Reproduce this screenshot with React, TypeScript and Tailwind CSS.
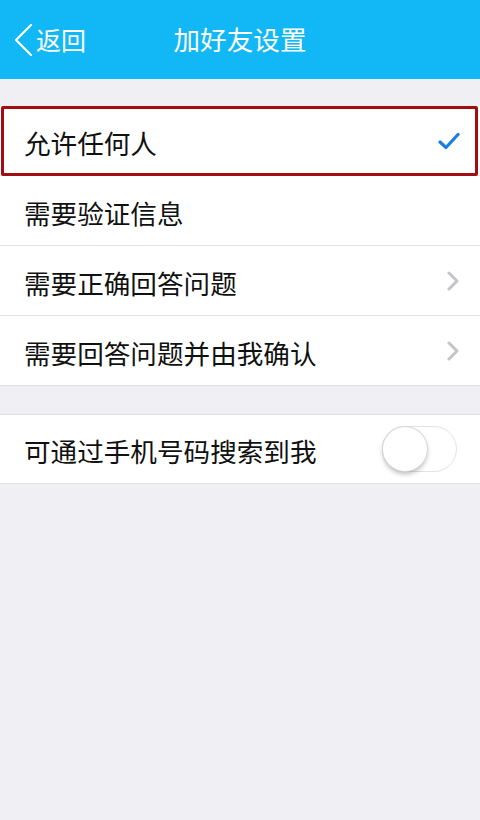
import React from "react";

const font = { fontFamily: '"Noto Sans CJK SC", "Noto Sans", sans-serif' };

function Chevron() {
  return (
    <svg width="14" height="20" viewBox="0 0 14 20" className="shrink-0">
      <polyline points="3,2 11,10 3,18" fill="none" stroke="#c4c4c9" strokeWidth="3" strokeLinecap="round" strokeLinejoin="round" />
    </svg>
  );
}

function Check() {
  return (
    <svg width="22" height="18" viewBox="0 0 22 18" className="shrink-0">
      <polyline points="2,10 8,15.5 20,2.5" fill="none" stroke="#1a7fe3" strokeWidth="3.2" strokeLinecap="round" strokeLinejoin="round" />
    </svg>
  );
}

function Row({ label, right, h = "h-[70px]", border = true, children }: { label: string; right?: React.ReactNode; h?: string; border?: boolean; children?: React.ReactNode }) {
  return (
    <div className={`relative flex ${h} items-center justify-between bg-white pl-[24px] pr-[20px] ${border ? "border-b border-[#e3e3e6]" : ""}`}>
      <span className="pt-[5px] text-[26.6px] leading-none text-[#111]">{label}</span>
      {right}
      {children}
    </div>
  );
}

export default function App() {
  return (
    <div className="min-h-[820px] w-[480px] bg-[#efeff4]" style={font}>
      <div className="relative flex h-[79px] items-center justify-center bg-[#12b7f5]">
        <div className="absolute left-[12px] top-0 flex h-[79px] items-center gap-[2px]">
          <svg width="22" height="34" viewBox="0 0 22 34">
            <polyline points="19,2 4,17 19,32" fill="none" stroke="#fff" strokeWidth="2.2" strokeLinecap="round" strokeLinejoin="round" />
          </svg>
          <span className="text-[25px] leading-none text-white">返回</span>
        </div>
        <span className="text-[26.6px] leading-none text-white">加好友设置</span>
      </div>

      <div className="mt-[27px]">
        <Row label="允许任何人" right={<Check />}>
          <div className="absolute left-[1px] right-[2px] top-0 bottom-[-1px] rounded-[2px] border-[3px] border-[#a10d10]" />
        </Row>
        <Row label="需要验证信息" />
        <Row label="需要正确回答问题" right={<Chevron />} />
        <Row label="需要回答问题并由我确认" right={<Chevron />} />
      </div>

      <div className="mt-[28px] border-t border-[#e3e3e6]">
        <Row label="可通过手机号码搜索到我" h="h-[69px]"
          right={
            <div className="mr-[3px] flex h-[46px] w-[75px] items-center rounded-full border border-[#e2e2e2] bg-white">
              <div className="h-[44px] w-[44px] rounded-full bg-white shadow-[0_3px_5px_rgba(0,0,0,0.28)] ring-1 ring-[#d8d8d8]" />
            </div>
          }
        />
      </div>
    </div>
  );
}
